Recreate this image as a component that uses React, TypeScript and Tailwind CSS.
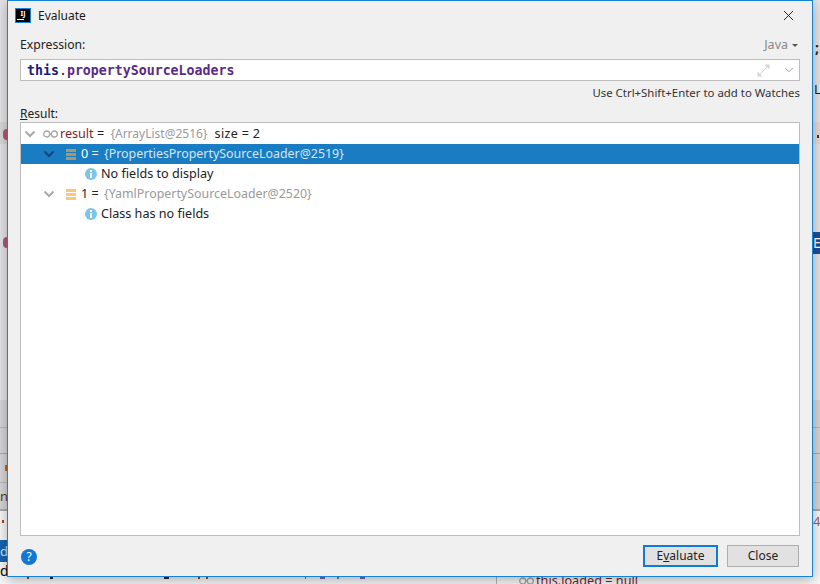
import React from 'react';
import { ChevronDown, X } from 'lucide-react';

const FONT = "font-['Noto_Sans','Open_Sans',sans-serif]";

// clipped descenders of the code line hidden behind the dialog
const CLIPPED_MARKS = [
  { left: 27, width: 2, color: '#a8431c' },
  { left: 50, width: 3, color: '#222' },
  { left: 164, width: 5, color: '#222' },
  { left: 198, width: 2, color: '#a8431c' },
  { left: 206, width: 2, color: '#a8431c' },
  { left: 305, width: 1, color: '#a5566e' },
  { left: 320, width: 5, color: '#9a5aa8' },
  { left: 337, width: 2, color: '#4a8fd0' },
  { left: 360, width: 5, color: '#9a5aa8' },
];

const RowChevron = ({ white }: { white?: boolean }) => (
  <svg width="12" height="8" viewBox="0 0 12 8" className="shrink-0">
    <path d="M1.5 1.5 L6 6 L10.5 1.5" fill="none" stroke={white ? '#14457a' : '#a9a9a9'} strokeWidth="2" />
  </svg>
);

const FieldIcon = ({ color }: { color: string }) => (
  <span className="flex flex-col gap-[1px] w-[10px] shrink-0">
    <span className="h-[3px]" style={{ background: color }} />
    <span className="h-[3px]" style={{ background: color }} />
    <span className="h-[3px]" style={{ background: color }} />
  </span>
);

const InfoIcon = () => (
  <svg width="12" height="12" viewBox="0 0 12 12" className="shrink-0">
    <circle cx="6" cy="6" r="6" fill="#7cc4ea" />
    <rect x="5" y="2" width="2" height="2" fill="#fff" />
    <rect x="5" y="5" width="2" height="5" fill="#fff" />
  </svg>
);

const Glasses = () => (
  <svg width="15" height="8" viewBox="0 0 15 8" className="shrink-0">
    <circle cx="3.7" cy="4" r="3" fill="none" stroke="#a5a5a5" strokeWidth="1.3" />
    <circle cx="11.3" cy="4" r="3" fill="none" stroke="#a5a5a5" strokeWidth="1.3" />
    <path d="M6.7 4 H8.3" stroke="#a5a5a5" strokeWidth="1.3" />
  </svg>
);

const ExpandIcon = () => (
  <svg width="13" height="13" viewBox="0 0 13 13">
    <path d="M7.5 0.5 H12.5 V5.5 Z" fill="#d4d4d4" />
    <path d="M0.5 7.5 V12.5 H5.5 Z" fill="#d4d4d4" />
    <path d="M3 10 L10 3" stroke="#d4d4d4" strokeWidth="1" />
  </svg>
);

export default function App() {
  return (
    <div className={`relative w-[820px] h-[584px] overflow-hidden bg-[#e4e4e6] ${FONT}`}>
      {/* the IDE peeking out behind the dialog */}
      <div className="absolute left-0 top-[400px] w-full h-[110px] bg-[#d6d6d8]" />
      <div className="absolute left-0 top-[510px] w-full h-[74px] bg-[#f7f7f7]" />
      <div className="absolute left-0 top-[427px] w-full h-px bg-[#b9b9b9]" />
      <div className="absolute left-0 top-[453px] w-full h-px bg-[#a9a9a9]" />
      <div className="absolute left-0 top-[482px] w-full h-px bg-[#b9b9b9]" />
      <div className="absolute left-0 top-[509px] w-full h-[2px] bg-[#a9a9a9]" />

      <div className="absolute left-0 top-[122px] w-[7px] h-[22px] bg-[#d9d9d9]" />
      <div className="absolute left-[813px] top-[122px] w-[7px] h-[22px] bg-[#e6d8d8]" />
      <div className="absolute left-[817px] top-[135px] w-[2px] h-[3px] bg-[#5a2a2a]" />
      <div className="absolute left-[3px] top-[129px] w-[4px] h-[11px] rounded-l-full bg-[#b05a78]" />
      <div className="absolute left-[3px] top-[237px] w-[4px] h-[11px] rounded-l-full bg-[#b05a78]" />
      <div className="absolute left-[5px] top-[465px] w-[2px] h-[6px] bg-[#c2661d]" />
      <div className="absolute left-[2px] top-[520px] w-[2px] h-[3px] bg-[#a8431c]" />
      <div className="absolute left-0 top-[540px] w-[7px] h-[22px] bg-[#1666b0] text-[#cfe2f3] text-[13px] leading-[22px]">d</div>
      <div className="absolute left-0 top-[563px] text-[14px] leading-[16px] text-black">d</div>
      <div className="absolute left-0 top-[488px] text-[13px] leading-[16px] text-[#5a3a1a]">n</div>
      <div className="absolute left-[813px] top-[232px] w-[7px] h-[22px] bg-[#1c4d9b] text-white text-[14px] leading-[22px]">E</div>
      <div className="absolute left-[815px] top-[38px] text-[14px] leading-[20px] font-bold text-[#222]">;</div>
      <div className="absolute left-[814px] top-[80px] text-[13px] leading-[18px] text-[#222]">L</div>
      <div className="absolute left-[813px] top-[512px] text-[13px] leading-[18px] text-[#a5566e]">4</div>
      {CLIPPED_MARKS.map((m) => (
        <div
          key={m.left}
          className="absolute top-[577px] h-[2px]"
          style={{ left: m.left, width: m.width, background: m.color }}
        />
      ))}
      <div className="absolute left-[536px] top-[572px] text-[12.7px] leading-[16px] text-[#7a1f2f]">this.loaded = null</div>
      <div className="absolute left-[519px] top-[577px]">
        <Glasses />
      </div>
      <div className="absolute left-[496px] top-[577px] w-px h-[7px] bg-[#b5b5b5]" />

      {/* dialog */}
      <div className="absolute left-[7px] top-0 w-[806px] h-[577px] flex flex-col bg-[#f0f0f0] border border-[#1783d7] shadow-[0_3px_12px_rgba(0,0,0,0.3)]">
        <header className="h-[29px] flex items-center shrink-0 pl-[7px] pr-[15px]">
          <div className="w-[16px] h-[15px] bg-black border border-[#1783d7] text-white text-[7px] leading-[10px] font-bold flex flex-col items-center">
            <span className="h-[9px]">IJ</span>
            <span className="w-[7px] h-px bg-white mt-[1px] self-start ml-[1px]" />
          </div>
          <span className="ml-[7px] text-[12px] text-[#1a1a1a]">Evaluate</span>
          <X size={17} strokeWidth={1.4} className="ml-auto -mt-[1px] text-[#222]" />
        </header>

        <div className="flex-1 flex flex-col min-h-0 pl-[12px] pr-[12px]">
          <div className="h-[20px] mt-[5px] flex justify-between items-center text-[12.2px] text-[#222]">
            <span>Expression:</span>
            <span className="flex items-center gap-[4px] pr-[2px] text-[#8a8a8a] text-[12.5px]">
              Java
              <span className="w-0 h-0 border-x-[3px] border-x-transparent border-t-[3px] border-t-[#555]" />
            </span>
          </div>

          <div className="h-[22px] mt-[4px] flex items-center bg-white border border-[#bdbdbd] pl-[6px] pr-[3px]">
            <span className="pt-[1px] font-['DejaVu_Sans_Mono',monospace] text-[13.25px] font-bold text-[#5b2a86]">
              <span className="text-[#1c1c78]">this</span>
              <span className="text-[#222] font-normal">.</span>
              propertySourceLoaders
            </span>
            <span className="ml-auto flex items-center gap-[12px]">
              <ExpandIcon />
              <ChevronDown size={14} strokeWidth={1.4} className="text-[#888]" />
            </span>
          </div>

          <div className="h-[21px] pt-[2px] flex items-center justify-end text-[11.4px] text-[#333]">
            Use Ctrl+Shift+Enter to add to Watches
          </div>

          <div className="h-[20px] pt-[3px] flex items-center text-[12px] text-[#222]">
            <span>
              <span className="underline">R</span>esult:
            </span>
          </div>

          <div className="flex-1 min-h-0 flex flex-col bg-white border border-[#bdbdbd] pt-[1px] text-[12.6px] text-[#222]">
            <div className="h-[20px] flex items-center pl-[3px]">
              <RowChevron />
              <span className="ml-[7px]">
                <Glasses />
              </span>
              <span className="ml-[2px] text-[#7a1f2f]">result</span>
              <span className="whitespace-pre">
                {' = '}
                <span className="ml-[3px] text-[#9a9a9a] text-[12px]">{'{ArrayList@2516}'}</span>
                <span className="tracking-[0.3px]">{'  size = 2'}</span>
              </span>
            </div>
            <div className="h-[20px] flex items-center pl-[22px] bg-[#1a7cc3] text-white">
              <RowChevron white />
              <span className="ml-[11px]">
                <FieldIcon color="#a7986a" />
              </span>
              <span className="ml-[5px] whitespace-pre">
                0 = <span className="ml-[2px] text-[#d6e6f2] text-[12.4px]">{'{PropertiesPropertySourceLoader@2519}'}</span>
              </span>
            </div>
            <div className="h-[20px] flex items-center pl-[64px]">
              <InfoIcon />
              <span className="ml-[4px]">No fields to display</span>
            </div>
            <div className="h-[20px] flex items-center pl-[22px]">
              <RowChevron />
              <span className="ml-[11px]">
                <FieldIcon color="#f5c97e" />
              </span>
              <span className="ml-[5px] whitespace-pre">
                1 = <span className="ml-[2px] text-[#9a9a9a] text-[12.4px]">{'{YamlPropertySourceLoader@2520}'}</span>
              </span>
            </div>
            <div className="h-[20px] flex items-center pl-[64px]">
              <InfoIcon />
              <span className="ml-[4px]">Class has no fields</span>
            </div>
          </div>

          <footer className="h-[40px] shrink-0 flex items-center pr-[1px] pl-[1px]">
            <button className="w-[16px] h-[16px] mt-[2px] rounded-full bg-[#1477d4] text-white text-[12px] leading-[16px] text-center">
              ?
            </button>
            <button className="ml-auto w-[75px] h-[22px] bg-[#e1e1e1] border-2 border-[#0f7bd6] text-[12px] text-[#222] leading-[16px]">
              E<span className="underline">v</span>aluate
            </button>
            <button className="ml-[9px] w-[72px] h-[22px] bg-[#e1e1e1] border border-[#adadad] text-[12px] text-[#222] leading-[18px]">
              Close
            </button>
          </footer>
        </div>
      </div>
    </div>
  );
}
